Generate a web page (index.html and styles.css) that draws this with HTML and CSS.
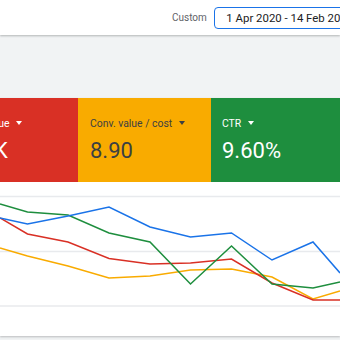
FILE: index.html
```html
<!DOCTYPE html>
<html lang="en">
<head>
  <meta charset="UTF-8" />
  <title>Performance overview</title>
  <link rel="stylesheet" href="styles.css">
</head>
<body>
  <header class="topbar">
    <span class="range-label">Custom</span>
    <div class="date-range">1 Apr 2020 - 14 Feb 2024</div>
  </header>

  <div class="panel">
    <div class="cards">
      <div class="card card-red">
        <div class="card-label">Conv. value <span class="caret"></span></div>
        <div class="card-value">132K</div>
      </div>
      <div class="card card-yellow">
        <div class="card-label">Conv. value / cost <span class="caret"></span></div>
        <div class="card-value">8.90</div>
      </div>
      <div class="card card-green">
        <div class="card-label">CTR <span class="caret"></span></div>
        <div class="card-value">9.60%</div>
      </div>
    </div>

    <div class="chart">
      <svg width="340" height="154" viewBox="0 0 340 154">
        <g class="grid">
          <line x1="0" y1="14.5" x2="340" y2="14.5" />
          <line x1="0" y1="69.5" x2="340" y2="69.5" />
          <line x1="0" y1="124" x2="340" y2="124" />
        </g>
        <!-- x: 0, 27.5, 68, 109, 150, 190.5, 231.5, 272, 313, 340 -->
        <polyline class="line-yellow" points="0,66 27.5,74 68,84 109,96 150,94 190.5,88 231.5,87 272,95 313,117 340,109" />
        <polyline class="line-red" points="0,36 27.5,52 68,60 109,76.5 150,82 190.5,81 231.5,77 272,101 313,118 340,118" />
        <polyline class="line-green" points="0,22 27.5,30 68,33 109,51 150,60 190.5,102 231.5,64 272,102 313,106 340,100" />
        <polyline class="line-blue" points="0,36 27.5,42 68,34 109,25 150,45 190.5,55 231.5,51 272,78 313,60 340,91" />
      </svg>
    </div>
  </div>
</body>
</html>
```

FILE: styles.css
```css
body {
  margin: 0;
  width: 340px;
  height: 340px;
  overflow: hidden;
  background-color: #f1f3f4;
  font-family: Roboto, 'Liberation Sans', sans-serif;
  color: #3c4043;
}
.topbar {
  height: 35px;
  background-color: white;
  box-shadow: 0 1px 2px rgba(60,64,67,0.35);
  display: flex;
  align-items: center;
  gap: 7px;
  padding-left: 172px;
  position: relative;
}
.range-label {
  font-size: 10px;
  color: #5f6368;
}
.date-range {
  flex-shrink: 0;
  height: 22px;
  box-sizing: border-box;
  border: 1.5px solid #1a73e8;
  border-radius: 4px;
  padding: 0 20px 0 11.5px;
  display: flex;
  align-items: center;
  font-size: 11.4px;
  color: #202124;
  white-space: nowrap;
}
.panel {
  margin-top: 63px;
  background-color: white;
  box-shadow: 0 1px 2px rgba(60,64,67,0.3);
}
.cards {
  display: flex;
  height: 84px;
  margin-left: -55px;
}
.card {
  flex: 0 0 133px;
  box-sizing: border-box;
  padding: 19px 12px 0;
  color: white;
}
.card-red {
  background-color: #d93025;
}
.card-yellow {
  background-color: #f9ab00;
  color: #3c4043;
}
.card-green {
  flex: 0 0 200px;
  background-color: #1e8e3e;
  padding-left: 11px;
}
.card-label {
  font-size: 10.4px;
  line-height: 13px;
  white-space: nowrap;
}
.caret {
  display: inline-block;
  width: 0;
  height: 0;
  margin-left: 4px;
  vertical-align: 2px;
  border-left: 3.5px solid transparent;
  border-right: 3.5px solid transparent;
  border-top: 4px solid currentColor;
}
.card-value {
  margin-top: 8px;
  font-size: 22px;
  line-height: 26px;
}
.chart {
  height: 154px;
}
.chart svg {
  display: block;
}
.grid line {
  stroke: #e8eaed;
  stroke-width: 1.5;
}
polyline {
  fill: none;
  stroke-width: 1.5;
  stroke-linejoin: miter;
}
.line-blue { stroke: #1a73e8; }
.line-green { stroke: #1e8e3e; }
.line-red { stroke: #d93025; }
.line-yellow { stroke: #f9ab00; }
```
